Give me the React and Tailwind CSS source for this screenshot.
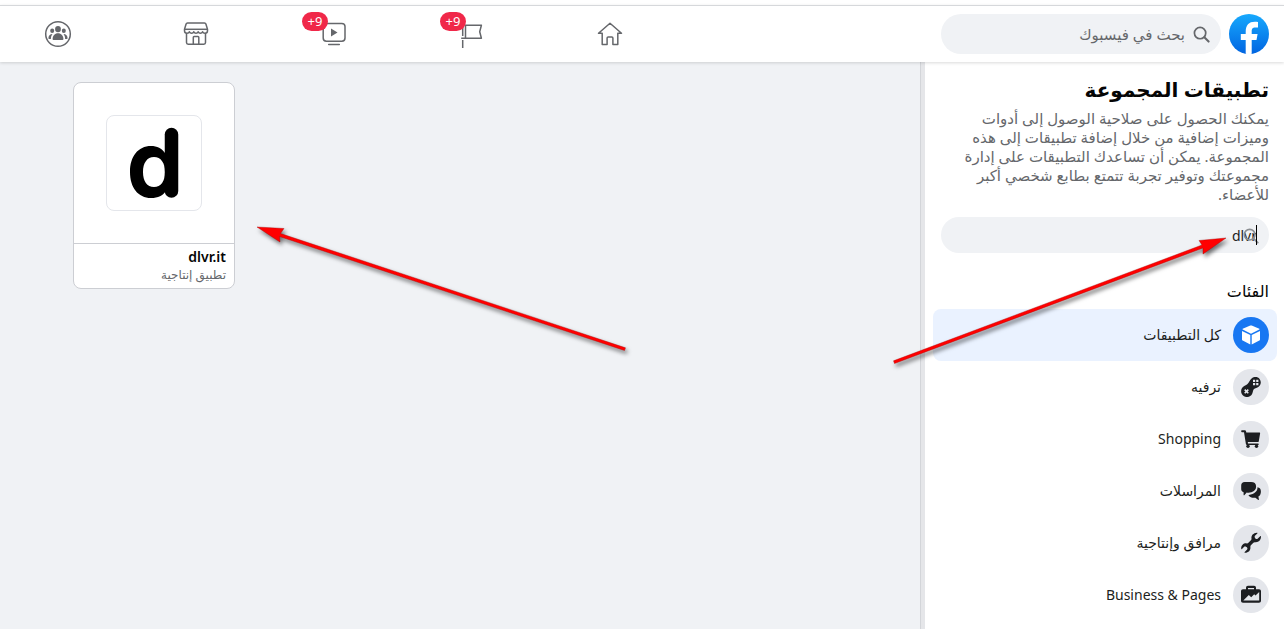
import React, { useState } from "react";

function GroupsIcon() {
  return (
    <svg viewBox="0 0 28 28" className="size-7" fill="#65676b" aria-hidden="true">
      <circle cx="14" cy="14" r="12.3" fill="none" stroke="#65676b" strokeWidth="1.5" />
      <ellipse cx="14" cy="9.1" rx="2.9" ry="3.2" />
      <ellipse cx="8.2" cy="10.7" rx="2" ry="2.3" />
      <ellipse cx="19.8" cy="10.7" rx="2" ry="2.3" />
      <path d="M9.400 20c-.5 0-.8-.3-.8-.8 0-3.300 2.200-5.900 5.400-5.900s5.400 2.600 5.400 5.900c0 .5-.3.800-.8.800z" />
      <path d="M8 14c-2.500.3-3.600 2-3.600 4.300 0 .4.300.7.7.700h1.800c0-1.900.5-3.500 1.500-4.700z" />
      <path d="M20 14c2.500.3 3.600 2 3.600 4.300 0 .4-.3.700-.7.700h-1.800c0-1.900-.5-3.500-1.500-4.700z" />
    </svg>
  );
}

function MarketIcon() {
  return (
    <svg viewBox="0 0 28 28" className="size-7" fill="none" stroke="#65676b" strokeWidth="1.5" strokeLinejoin="round" aria-hidden="true">
      <path d="M5.500 3h17c.7 0 1.200.4 1.400 1l1.600 5.200v1.600c0 1.500-1.100 2.500-2.500 2.500-1.200 0-2.100-.6-2.400-1.600-.4 1-1.200 1.600-2.200 1.600s-1.900-.6-2.200-1.600c-.4 1-1.200 1.600-2.200 1.600s-1.800-.6-2.200-1.600c-.3 1-1.200 1.600-2.200 1.600s-1.800-.6-2.200-1.600c-.3 1-1.200 1.600-2.400 1.600-1.400 0-2.500-1-2.500-2.500V9.200L4.100 4c.2-.6.7-1 1.400-1z" />
      <path d="M2.700 9.300h22.600" />
      <path d="M4.500 13v9.500c0 1 .7 1.700 1.700 1.700h15.600c1 0 1.700-.7 1.700-1.700V13" />
      <path d="M11.300 24v-6.600c0-.5.3-.8.8-.8h3.900c.5 0 .8.300.8.800V24" />
    </svg>
  );
}

function WatchIcon() {
  return (
    <svg viewBox="0 0 28 28" className="size-7" fill="none" stroke="#65676b" strokeWidth="1.500" strokeLinecap="round" aria-hidden="true">
      <rect x="3.200" y="3.400" width="21.800" height="17.800" rx="3.200" />
      <path d="M8.700 24.400h10.600" />
      <path d="M11 8.600v7.800l6.500-3.900z" fill="#65676b" stroke="none" />
    </svg>
  );
}

function FlagIcon() {
  return (
    <svg viewBox="0 0 28 28" className="size-7" fill="none" stroke="#65676b" strokeWidth="1.500" strokeLinejoin="round" aria-hidden="true">
      <path d="M4.700 4v12M4.700 20v8" />
      <path d="M3.200 18.300h20.200l-1.700-6.500 1.700-6.500H7.500v13" />
    </svg>
  );
}

function HomeIcon() {
  return (
    <svg viewBox="0 0 28 28" className="size-7" fill="none" stroke="#65676b" strokeWidth="1.500" strokeLinejoin="round" aria-hidden="true">
      <path d="M14 3.200 2.500 13.200h3.700v11.200h4.900v-6.300c0-.7.400-1.100 1.100-1.100h3.600c.7 0 1.100.4 1.100 1.100v6.300h4.900V13.200h3.700z" />
    </svg>
  );
}

function SearchIcon({ className }) {
  return (
    <svg viewBox="0 0 18 18" className={className} fill="none" stroke="currentColor" strokeWidth="1.800" strokeLinecap="round" aria-hidden="true">
      <circle cx="7.500" cy="7.500" r="6" />
      <path d="m12 12 4.500 4.500" strokeWidth="2.200" />
    </svg>
  );
}

function FacebookLogo() {
  return (
    <svg viewBox="0 0 40 40" className="size-10" aria-hidden="true">
      <defs>
        <linearGradient id="fb" x1="0" y1="0" x2="0" y2="1">
          <stop offset="0" stopColor="#17a9fd" />
          <stop offset="1" stopColor="#0165e1" />
        </linearGradient>
      </defs>
      <circle cx="20" cy="20" r="20" fill="url(#fb)" />
      <path d="M16.700 39.800V26H11.800v-6h4.900v-2c0-7 3.100-10.200 9.200-10.200 1.200 0 2.200.1 3.100.3v5.400c-.6-.1-1.500-.1-2.600-.1-2.900 0-3.700 1.100-3.700 4V20h5.900l-1.100 6h-4.800v13.700c-2 .4-4 .4-6 .1z" fill="#fff" />
    </svg>
  );
}

function CubeIcon() {
  return (
    <svg viewBox="0 0 20 20" className="size-5" fill="#fff" aria-hidden="true">
      <path d="M9.300.6c.5-.2.900-.2 1.400 0l7.600 3.200c.3.200.3.600 0 .8L10 8.700 1.700 4.600c-.3-.2-.3-.6 0-.8z" />
      <path d="M1 6.100 9.300 10v9.600l-7.600-4c-.5-.3-.7-.7-.7-1.200zM19 6.100 10.700 10v9.600l7.600-4c.5-.3.700-.7.700-1.200z" />
    </svg>
  );
}

function GameIcon() {
  return (
    <svg viewBox="0 0 20 20" className="size-5" aria-hidden="true">
      <path d="M10.600 1.500c2.600-2.200 6.200-1.900 8 .4 1.900 2.400 1.500 6-1 7.800-1.600 1.200-3.400 1.300-4.600 2.400-1.200 1.200-.9 3-1.900 4.900-1.500 2.900-5.300 3.900-8.100 2.200-2.900-1.700-3.700-5.500-2-8.100C2.400 9 4.900 8.800 6.500 7.100c1.600-1.800 2.300-4.100 4.100-5.600z" fill="#1c1e21" />
      <path d="M3.700 12.600 7.300 16.200M7.300 12.600 3.700 16.200" stroke="#e4e6eb" strokeWidth="1.600" />
      <path d="M12 2.800h2.200V5H12zM15.200 2.800h2.200V5h-2.200zM12 6h2.200v2.200H12zM15.200 6h2.200v2.200h-2.200z" fill="#e4e6eb" />
    </svg>
  );
}

function CartIcon() {
  return (
    <svg viewBox="0 0 20 20" className="size-5" fill="#1c1e21" aria-hidden="true">
      <path d="M1 1.300h2.900c.6 0 1 .3 1.100.9l.3 1.400h13c.6 0 .9.400.8 1l-1.300 7.600c-.1.600-.5.900-1.100.9H6.800l.2 1.300h10c.5 0 .8.300.8.800s-.3.800-.8.800H6c-.6 0-1-.3-1.100-.9L3 3.200H1c-.5 0-.8-.4-.8-.9s.3-1 .8-1z" />
      <circle cx="7" cy="17.200" r="1.700" />
      <circle cx="15.500" cy="17.200" r="1.700" />
    </svg>
  );
}

function ChatIcon() {
  return (
    <svg viewBox="0 0 20 20" className="size-5" fill="#1c1e21" aria-hidden="true">
      <path d="M3.700.9C1.500.9.200 2.300.200 4.400V8c0 1.600.9 2.900 2.400 3.300V14c0 .4.400.5.700.2l2.400-2.600c1.400.3 3.100.2 4.700-.3 3.200-1 4.700-2.700 4.700-5.700C15.100 2.300 13.300.9 10 .9z" />
      <path d="M16.500 6.300c2.200.5 3.400 1.700 3.400 4.100 0 2.200-.7 4.200-2.500 5.200l.5 3c.1.400-.3.600-.6.300l-2.900-2.200c-3 .4-5.400-.4-6.800-2.200-.2-.3-.1-.5.300-.6 5.500-.8 8.700-3.300 8.600-7.600z" />
    </svg>
  );
}

function WrenchIcon() {
  return (
    <svg viewBox="0 0 20 20" className="size-5 overflow-visible" fill="#1c1e21" aria-hidden="true">
      <path d="M16.300.4 13.700 3.100c-.2 1.400.2 2.400 1.500 2.900.5.200 1 .1 1.400-.3l2.600-2.500c.4-.4.800-.2.800.4-.1 3.900-2.600 6.100-6 5.600-.7-.1-1.100.1-1.600.6l-2.500 2.500c-.5.500-.6.900-.5 1.600.4 3.400-1.900 5.800-5.300 5.800-.6 0-.8-.4-.4-.8l2.400-2.400c.4-.4.400-.9.200-1.400-.5-1.200-1.500-1.700-2.900-1.500L1 16c-.4.400-.8.200-.8-.4 0-3.400 2.300-5.500 5.500-5.200.7.100 1.200-.1 1.700-.6L9.900 7.300c.5-.5.700-1 .6-1.700C10 2.300 12.300 0 15.900-.300c.6 0 .8.300.4.700z" />
    </svg>
  );
}

function CaseIcon() {
  return (
    <svg viewBox="0 0 20 20" className="size-5" aria-hidden="true">
      <path d="M5 4.200V2.700C5 1.500 5.800.700 7 .700h6c1.200 0 2 .8 2 2v1.500h3c1.200 0 2 .8 2 2v9.500c0 1.200-.8 2-2 2H2c-1.200 0-2-.8-2-2V6.200c0-1.200.8-2 2-2zm2 0h6V2.900H7z" fill="#1c1e21" fillRule="evenodd" />
      <path d="m2.300 15.600 5.500-5.500 2.400 2.100 3-2.900 1.300 1.200 3.700-3.500v8.600z" fill="#e4e6eb" />
    </svg>
  );
}

const navItems = [
  { label: "الصفحة الرئيسية", Icon: HomeIcon },
  { label: "الصفحات", Icon: FlagIcon, badge: "+9" },
  { label: "الفيديو", Icon: WatchIcon, badge: "+9" },
  { label: "المتجر", Icon: MarketIcon },
  { label: "المجموعات", Icon: GroupsIcon },
];

const categories = [
  { label: "كل التطبيقات", Icon: CubeIcon, active: true },
  { label: "ترفيه", Icon: GameIcon },
  { label: "Shopping", Icon: CartIcon },
  { label: "المراسلات", Icon: ChatIcon },
  { label: "مرافق وإنتاجية", Icon: WrenchIcon },
  { label: "Business & Pages", Icon: CaseIcon },
];

const intro = [
  "يمكنك الحصول على صلاحية الوصول إلى أدوات",
  "وميزات إضافية من خلال إضافة تطبيقات إلى هذه",
  "المجموعة. يمكن أن تساعدك التطبيقات على إدارة",
  "مجموعتك وتوفير تجربة تتمتع بطابع شخصي أكبر",
  "للأعضاء.",
];

function Header() {
  return (
    <header className="z-10 flex h-[57px] items-center border-t border-[#d6d8db] bg-white pr-[15px] shadow-[0_1px_3px_rgba(0,0,0,0.15)]">
      <a href="#home" aria-label="فيسبوك" className="shrink-0"><FacebookLogo /></a>
      <label className="mr-2 flex h-10 w-[280px] shrink-0 items-center gap-2 rounded-full bg-[#f0f2f5] px-[11px] text-[#65676b]">
        <SearchIcon className="size-[17px] shrink-0" />
        <input type="search" aria-label="بحث في فيسبوك" placeholder="بحث في فيسبوك" className="w-full min-w-0 bg-transparent text-[15px] outline-none placeholder:text-[#65676b]" />
      </label>
      <nav className="mr-auto flex gap-[110px] pl-11">
        {navItems.map(({ label, Icon, badge }) => (
          <button key={label} type="button" aria-label={label} className="relative size-7">
            <Icon />
            {badge && (
              <span dir="ltr" className="absolute -top-2 -left-[18px] flex h-[19px] w-[26px] items-center justify-center rounded-full bg-[#f02849] text-[13px] text-white">{badge}</span>
            )}
          </button>
        ))}
      </nav>
    </header>
  );
}

function Sidebar() {
  const [query, setQuery] = useState("dlvr");
  return (
    <aside className="w-[363px] shrink-0 border-l-4 border-[#e5e6e9] bg-white pt-3 pr-[7px] pl-2">
      <div className="px-2">
        <h1 className="text-xl leading-8 font-semibold text-[#050505]">تطبيقات المجموعة</h1>
        <p className="mt-[3px] text-[15px] leading-[19px] text-[#65676b]">
          {intro.map((line) => <span key={line} className="block whitespace-nowrap">{line}</span>)}
        </p>
        <div className="relative mt-[13px] h-9">
          <input aria-label="البحث عن تطبيقات" value={query} onChange={(e) => setQuery(e.target.value)} className="h-9 w-full rounded-full bg-[#f0f2f5] px-3 text-sm text-[#1c1e21] outline-none" />
          <SearchIcon className="pointer-events-none absolute top-[11px] right-[10px] size-4 text-[#8a8d91]" />
          <span className="absolute top-2 right-3 h-5 w-px bg-black" />
        </div>
        <h2 className="mt-6 text-base leading-7 font-medium text-[#050505]">الفئات</h2>
      </div>
      <ul className="mt-1">
        {categories.map(({ label, Icon, active }) => (
          <li key={label}>
            <button type="button" className={`flex h-[52px] w-full items-center gap-3 rounded-lg px-2 text-sm text-[#1c1e21] ${active ? "bg-[#eaf2ff]" : ""}`}>
              <span className={`flex size-9 shrink-0 items-center justify-center rounded-full ${active ? "bg-[#1877f2]" : "bg-[#e4e6eb]"}`}><Icon /></span>
              <span>{label}</span>
            </button>
          </li>
        ))}
      </ul>
    </aside>
  );
}

function AppCard() {
  return (
    <a href="#dlvr" className="block w-[162px] overflow-hidden rounded-lg border border-[#ccced3] bg-white">
      <div className="flex h-40 items-center justify-center">
        <div className="flex size-24 items-center justify-center rounded-lg border border-[#e4e6eb]">
          <svg viewBox="0 0 96 96" className="size-24 shrink-0" aria-hidden="true">
            <path d="M65.500 19.500v56.500" stroke="#000" strokeWidth="13.500" strokeLinecap="round" />
            <path fillRule="evenodd" d="M45 31c6 0 11 2.500 14 7h5v38h-4c-3 4.500-8 7-15 7-13 0-21-10.500-21-26s8-26 21-26zm3 11c-7 0-11 6-11 15s4 15 11 15 11-6 11-15-4-15-11-15z" />
          </svg>
        </div>
      </div>
      <div className="border-t border-[#ccced3] px-2 pt-[3px] pb-[5px]">
        <div className="text-sm leading-5 font-semibold text-[#050505]">dlvr.it</div>
        <div className="text-xs leading-4 text-[#65676b]">تطبيق إنتاجية</div>
      </div>
    </a>
  );
}

function Arrows() {
  return (
    <svg width="1284" height="629" viewBox="0 0 1284 629" className="pointer-events-none absolute top-0 left-0 z-20 drop-shadow-[2px_3px_2px_rgba(0,0,0,0.55)]" fill="#f00" stroke="#a00" strokeWidth="0.400" aria-hidden="true">
      <path d="M257 227 284 228.500 280.500 233.500 625.500 347.800 624.500 350.500 279.500 236.500 280 242z" />
      <path d="M1226 238 1199 240.500 1202 245 893.500 360.800 894.500 363.500 1203 248 1203 254z" />
    </svg>
  );
}

export default function App() {
  return (
    <div dir="rtl" className="relative flex min-h-screen flex-col overflow-hidden bg-white pt-[5px] font-['Noto_Sans','DejaVu_Sans',sans-serif]">
      <Header />
      <div className="flex flex-1">
        <Sidebar />
        <main className="flex flex-1 justify-end border-r border-[#d3d5d9] bg-[#f0f2f5] pt-5 pl-[73px]">
          <div><AppCard /></div>
        </main>
      </div>
      <Arrows />
    </div>
  );
}
